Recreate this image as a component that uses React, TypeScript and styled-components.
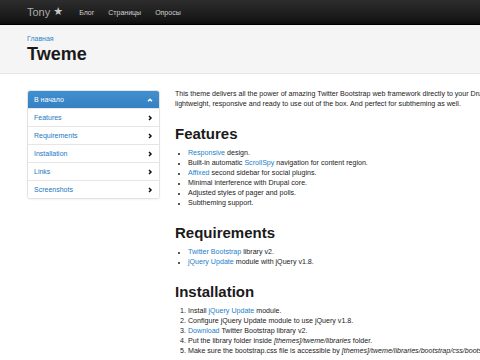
import React from "react";
import styled, { createGlobalStyle } from "styled-components";

const Global = createGlobalStyle`
  html, body { margin: 0; padding: 0; overflow: hidden; background: #fff; }
  body { font-family: "Liberation Sans", Arial, sans-serif; color: #222; }
  * { box-sizing: border-box; }
`;

const Navbar = styled.div`
  height: 25px;
  background: linear-gradient(#2d2d2d, #161616 85%, #0c0c0c);
  border-bottom: 1px solid #000;
  display: flex;
  align-items: center;
  padding-left: 27px;
`;

const Brand = styled.a`
  font-size: 11px;
  color: #aaa;
  margin-right: 16px;
  display: flex;
  align-items: center;
  gap: 3px;
  margin-top: -1px;
`;

const Star = styled.span`
  font-family: "DejaVu Sans", sans-serif;
  font-size: 11px;
  color: #c8c8c8;
`;

const NavLinks = styled.nav`
  display: flex;
  gap: 14px;
`;

const NavLink = styled.a`
  font-size: 7px;
  color: #d0d0d0;
`;

const Header = styled.div`
  height: 49px;
  background: #f5f5f5;
  border-bottom: 1px solid #e6e6e6;
  padding: 9px 0 0 27px;
`;

const Crumb = styled.a`
  display: block;
  font-size: 7px;
  line-height: 10px;
  color: #2f86c8;
`;

const Title = styled.h1`
  margin: 0;
  font-size: 18px;
  line-height: 20px;
  font-weight: bold;
  color: #1a1a1a;
`;

const Main = styled.div`
  display: flex;
  gap: 15px;
  padding-left: 27px;
`;

const Sidebar = styled.ul`
  list-style: none;
  margin: 16px 0 0;
  padding: 0;
  width: 133px;
  flex: none;
  align-self: flex-start;
  border: 1px solid #e3e3e3;
  border-radius: 3px;
  background: #fff;
  box-shadow: 0 1px 2px rgba(0, 0, 0, 0.05);
  overflow: hidden;
`;

const SideItem = styled.li<{ $active?: boolean }>`
  height: ${(p) => (p.$active ? "17px" : "18px")};
  border-top: ${(p) => (p.$active ? "none" : "1px solid #e6e6e6")};
  display: flex;
  align-items: center;
  justify-content: space-between;
  padding: 0 6px 0 6px;
  font-size: 7px;
  color: ${(p) => (p.$active ? "#fff" : "#1b78c2")};
  background: ${(p) => (p.$active ? "linear-gradient(#4190d0, #3580c2)" : "#fff")};
`;

const Content = styled.div`
  padding-top: 15px;
  width: 700px;
  flex: none;
  font-size: 7.1px;
  line-height: 10px;
  color: #222;
`;

const Para = styled.p`
  margin: 0;
  white-space: nowrap;
`;

const H2 = styled.h2`
  margin: 15px 0 4px;
  font-size: 15px;
  line-height: 20px;
  font-weight: bold;
  color: #1a1a1a;
`;

const UL = styled.ul`
  margin: 0;
  padding-left: 13px;
  white-space: nowrap;
  li::marker { font-size: 6px; }
`;

const OL = styled.ol`
  margin: 0;
  padding-left: 13px;
  white-space: nowrap;
`;

const Link = styled.a`
  color: #1b7fca;
`;

const Path = styled.em`
  font-style: italic;
`;

const Chevron = ({ up, color }: { up?: boolean; color: string }) => (
  <svg width="6" height="6" viewBox="0 0 6 6">
    <path
      d={up ? "M1 4.2 L3 2.2 L5 4.2" : "M2 1 L4 3 L2 5"}
      fill="none"
      stroke={color}
      strokeWidth="1.5"
    />
  </svg>
);

const items = ["Features", "Requirements", "Installation", "Links", "Screenshots"];

export default function App() {
  return (
    <>
      <Global />
      <Navbar>
        <Brand>
          Tony <Star>★</Star>
        </Brand>
        <NavLinks>
          <NavLink>Блог</NavLink>
          <NavLink>Страницы</NavLink>
          <NavLink>Опросы</NavLink>
        </NavLinks>
      </Navbar>
      <Header>
        <Crumb>Главная</Crumb>
        <Title>Tweme</Title>
      </Header>
      <Main>
        <Sidebar>
          <SideItem $active>
            В начало <Chevron up color="#fff" />
          </SideItem>
          {items.map((i) => (
            <SideItem key={i}>
              {i} <Chevron color="#111" />
            </SideItem>
          ))}
        </Sidebar>
        <Content>
          <Para>
            This theme delivers all the power of amazing Twitter Bootstrap web framework directly to your Drupal site. It's
            <br />
            lightweight, responsive and ready to use out of the box. And perfect for subtheming as well.
          </Para>
          <H2>Features</H2>
          <UL>
            <li><Link>Responsive</Link> design.</li>
            <li>Built-in automatic <Link>ScrollSpy</Link> navigation for content region.</li>
            <li><Link>Affixed</Link> second sidebar for social plugins.</li>
            <li>Minimal interference with Drupal core.</li>
            <li>Adjusted styles of pager and polls.</li>
            <li>Subtheming support.</li>
          </UL>
          <H2>Requirements</H2>
          <UL>
            <li><Link>Twitter Bootstrap</Link> library v2.</li>
            <li><Link>jQuery Update</Link> module with jQuery v1.8.</li>
          </UL>
          <H2>Installation</H2>
          <OL>
            <li>Install <Link>jQuery Update</Link> module.</li>
            <li>Configure jQuery Update module to use jQuery v1.8.</li>
            <li><Link>Download</Link> Twitter Bootstrap library v2.</li>
            <li>Put the library folder inside <Path>[themes]/tweme/libraries</Path> folder.</li>
            <li>Make sure the bootstrap.css file is accessible by <Path>[themes]/tweme/libraries/bootstrap/css/bootstrap.css</Path></li>
          </OL>
        </Content>
      </Main>
    </>
  );
}
